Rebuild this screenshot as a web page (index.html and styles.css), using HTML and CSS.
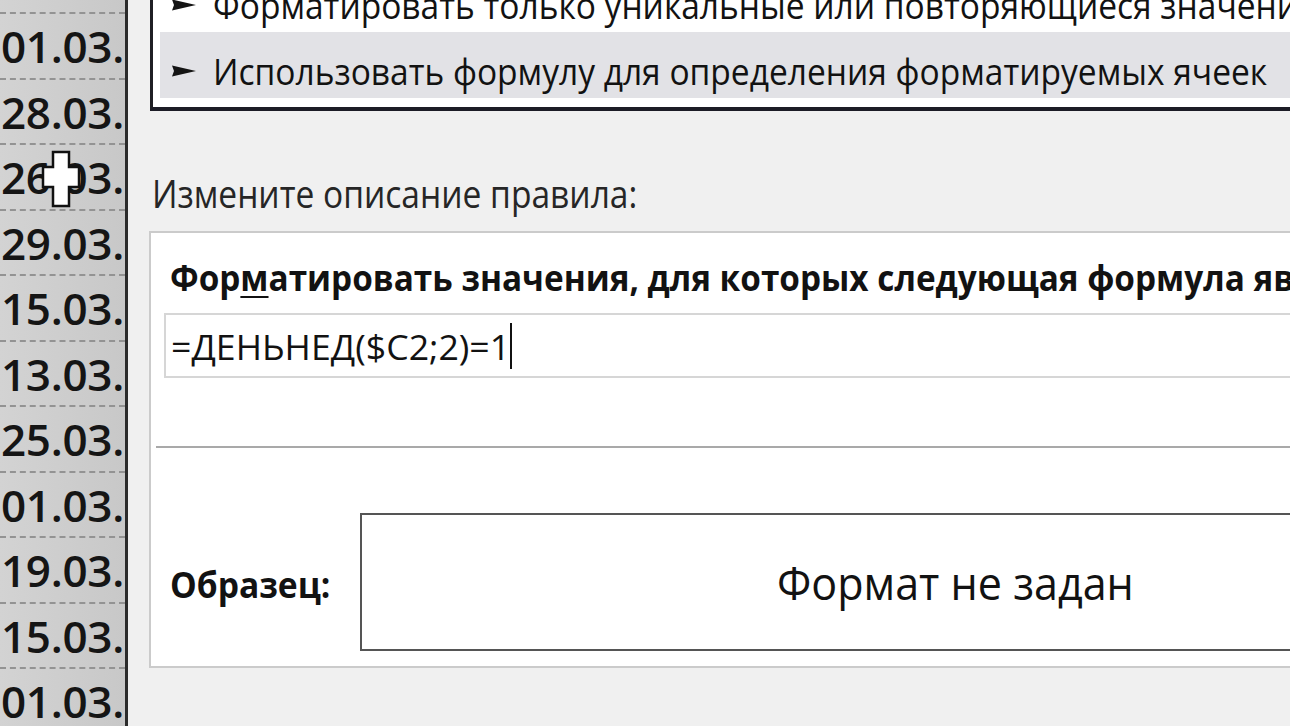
FILE: index.html
```html
<!DOCTYPE html>
<html lang="ru">
<head>
<meta charset="utf-8">
<title>Создание правила форматирования</title>
<link rel="stylesheet" href="styles.css">
</head>
<body>
<div class="sheet">
  <div class="cell"><span class="d">01.03.</span></div>
  <div class="cell"><span class="d">28.03.</span></div>
  <div class="cell cur-cell"><span class="d">26.03.</span>
    <svg class="cursor" width="40" height="58" viewBox="0 0 40 58" aria-hidden="true">
      <polygon points="12,2 28,2 28,17 38,17 38,37 28,37 28,56 12,56 12,37 2,37 2,17 12,17" fill="#fff" stroke="#111" stroke-width="2.5" stroke-linejoin="miter"/>
    </svg>
  </div>
  <div class="cell"><span class="d">29.03.</span></div>
  <div class="cell"><span class="d">15.03.</span></div>
  <div class="cell"><span class="d">13.03.</span></div>
  <div class="cell"><span class="d">25.03.</span></div>
  <div class="cell"><span class="d">01.03.</span></div>
  <div class="cell"><span class="d">19.03.</span></div>
  <div class="cell"><span class="d">15.03.</span></div>
  <div class="cell"><span class="d">01.03.</span></div>
</div>
<div class="dialog">
  <div class="listbox">
    <div class="item">
      <svg class="arrow" width="24" height="12" viewBox="0 0 24 12" aria-hidden="true"><polygon points="0,0.5 24,6 0,11.5 2,6" fill="#141414"/></svg>
      <span class="txt sx-list">Форматировать только уникальные или повторяющиеся значения</span>
    </div>
    <div class="item sel">
      <svg class="arrow" width="24" height="12" viewBox="0 0 24 12" aria-hidden="true"><polygon points="0,0.5 24,6 0,11.5 2,6" fill="#141414"/></svg>
      <span class="txt sx-list">Использовать формулу для определения форматируемых ячеек</span>
    </div>
  </div>
  <div class="rule-title"><span class="sx-title">Измените описание правила:</span></div>
  <div class="panel">
    <div class="label"><span class="sx-label">Фор<u>м</u>атировать значения, для которых следующая формула является истинной:</span></div>
    <div class="input"><span class="sx-formula">=ДЕНЬНЕД($C2;2)=1</span><span class="caret"></span></div>
    <div class="divider"></div>
    <div class="sample">
      <div class="sample-label"><span class="sx-sample">Образец:</span></div>
      <div class="preview"><span class="sx-preview">Формат не задан</span></div>
    </div>
  </div>
</div>
</body>
</html>
```
FILE: styles.css
```css
html, body {
  margin: 0;
  padding: 0;
}
body {
  width: 1290px;
  height: 726px;
  overflow: hidden;
  display: flex;
  background: #f0f0f0;
  font-family: "Open Sans", "Noto Sans", sans-serif;
  font-weight: 500;
  color: #121212;
}

/* spreadsheet column */
.sheet {
  width: 128px;
  flex: none;
  height: 726px;
  box-sizing: border-box;
  padding-top: 12px;
  background: linear-gradient(to right, #d3d3d3, #c8c8c8);
  border-right: 3px solid #2b2b2b;
  overflow: hidden;
}
.cell {
  position: relative;
  height: 65.5px;
  box-sizing: border-box;
  border-top: 2px dashed #939393;
  font-size: 44px;
  font-weight: 600;
  line-height: 1;
  padding-top: 10px;
  padding-left: 1px;
  white-space: nowrap;
  letter-spacing: -0.3px;
  color: #151515;
}
.d {
  display: inline-block;
}
.cursor {
  position: absolute;
  left: 41px;
  top: 5px;
}

/* dialog */
.dialog {
  flex: 1;
  min-width: 0;
  display: flex;
  flex-direction: column;
  overflow: hidden;
}
.listbox {
  margin-top: -40px;
  margin-left: 22px;
  padding: 6px 0 9px 7px;
  background: #fff;
  border-left: 3px solid #1f1f24;
  border-bottom: 4px solid #1c1c26;
}
.item {
  height: 66px;
  box-sizing: border-box;
  padding-top: 20px;
  padding-left: 12px;
  display: flex;
  align-items: flex-start;
  font-size: 37px;
  line-height: 1;
  white-space: nowrap;
}
.item.sel {
  background: #e2e2e6;
}
.arrow {
  flex: none;
  margin-top: 13px;
  margin-right: 17px;
}
.txt {
  display: inline-block;
}
.sx-list {
  transform: scaleX(0.906);
  transform-origin: left center;
}

.rule-title {
  margin-top: 62px;
  margin-left: 24px;
  font-size: 39px;
  line-height: 1;
  white-space: nowrap;
  color: #262626;
}
.sx-title {
  display: inline-block;
  transform: scaleX(0.86);
  transform-origin: left center;
}

.panel {
  margin-top: 19px;
  margin-left: 21px;
  height: 437px;
  box-sizing: border-box;
  background: #fff;
  border: 2px solid #cbcbcb;
  border-right: none;
  display: flex;
  flex-direction: column;
}
.label {
  padding-top: 27px;
  padding-left: 19px;
  font-size: 35px;
  font-weight: 700;
  line-height: 1;
  white-space: nowrap;
}
.label u {
  text-decoration-thickness: 2px;
  text-underline-offset: 5px;
}
.sx-label {
  display: inline-block;
  transform: scaleX(0.952);
  transform-origin: left center;
}
.input {
  margin-top: 18px;
  margin-left: 13px;
  height: 65px;
  box-sizing: border-box;
  border: 2px solid #d6d6d6;
  border-right: none;
  padding-top: 14px;
  padding-left: 5px;
  font-size: 35px;
  line-height: 1;
  white-space: nowrap;
  display: flex;
  align-items: flex-start;
}
.sx-formula {
  display: inline-block;
  transform: scaleX(1.02);
  transform-origin: left center;
}
.caret {
  display: inline-block;
  width: 2px;
  height: 46px;
  margin-top: -6px;
  margin-left: 6px;
  background: #111;
}
.divider {
  margin-top: 68px;
  margin-left: 5px;
  height: 2px;
  background: #a9a9a9;
}
.sample {
  margin-top: 65px;
  display: flex;
  align-items: center;
}
.sample-label {
  width: 209px;
  flex: none;
  box-sizing: border-box;
  padding-left: 19px;
  padding-top: 4px;
  font-size: 35px;
  font-weight: 700;
  line-height: 1;
  white-space: nowrap;
}
.sx-sample {
  display: inline-block;
  transform: scaleX(0.96);
  transform-origin: left center;
}
.preview {
  flex: none;
  width: 1190px;
  height: 138px;
  box-sizing: border-box;
  border: 2px solid #555;
  display: flex;
  align-items: center;
  justify-content: center;
  font-size: 45px;
  line-height: 1;
  white-space: nowrap;
}
.sx-preview {
  display: inline-block;
  transform: scaleX(0.957);
  transform-origin: center center;
}
```
